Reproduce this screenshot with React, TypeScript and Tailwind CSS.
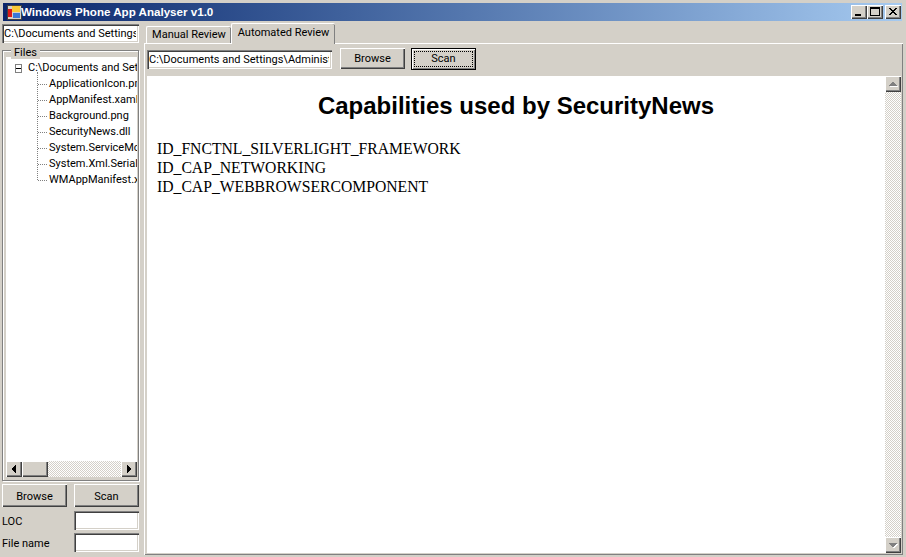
import React from "react";

const raised = "bg-[#d4d0c8] shadow-[inset_1px_1px_0_#ffffff,inset_-1px_-1px_0_#404040,inset_-2px_-2px_0_#808080]";
const sunken = "bg-white shadow-[inset_1px_1px_0_#808080,inset_2px_2px_0_#404040,inset_-1px_-1px_0_#ffffff,inset_-2px_-2px_0_#d4d0c8]";
const checker = "bg-[repeating-conic-gradient(#d4d0c8_0_25%,#ffffff_0_50%)] bg-[length:2px_2px]";
const ui = "font-['Roboto',sans-serif] text-[11px] text-black";

function Btn({ children, className = "" }: { children: React.ReactNode; className?: string }) {
  return <div className={`flex items-center justify-center ${ui} ${raised} ${className}`}>{children}</div>;
}

function Input({ value, className = "" }: { value?: string; className?: string }) {
  return (
    <div className={`${sunken} pl-[2px] pr-[3px] pt-[2px] leading-[15px] ${ui} ${className}`}>
      <div className="overflow-hidden whitespace-nowrap">{value}</div>
    </div>
  );
}

function CaptionBtn({ children, className = "" }: { children: React.ReactNode; className?: string }) {
  return (
    <div className={`flex h-[14px] w-[16px] items-center justify-center ${raised} ${className}`}>
      <svg width="16" height="14" viewBox="0 0 16 14" shapeRendering="crispEdges">{children}</svg>
    </div>
  );
}

function ScrollBtn({ dir, dark }: { dir: "up" | "down" | "left" | "right"; dark?: boolean }) {
  const pts = {
    up: "8,5 4,10 12,10",
    down: "4,6 12,6 8,11",
    left: "5,8 10,4 10,12",
    right: "11,8 6,4 6,12",
  }[dir];
  return (
    <div className={`h-[16px] w-[16px] shrink-0 ${raised}`}>
      <svg width="16" height="16" viewBox="0 0 16 16" shapeRendering="crispEdges">
        {!dark && <polygon points={pts} fill="#ffffff" transform="translate(1 1)" />}
        <polygon points={pts} fill={dark ? "#000000" : "#808080"} />
      </svg>
    </div>
  );
}

const files = [
  "ApplicationIcon.png",
  "AppManifest.xaml",
  "Background.png",
  "SecurityNews.dll",
  "System.ServiceModel.dll",
  "System.Xml.Serialization.dll",
  "WMAppManifest.xml",
];

function TreeView() {
  return (
    <div className={`relative min-h-0 flex-1 overflow-hidden pt-[3px] leading-[16px] ${ui}`}>
      <div className="flex h-[16px] items-center">
        <div className="ml-[9px] flex h-[9px] w-[9px] items-center justify-center border border-[#808080] bg-white">
          <div className="h-[1px] w-[5px] bg-black" />
        </div>
        <span className="ml-[6px] whitespace-nowrap">C:\Documents and Settings</span>
      </div>
      <div className="absolute left-[31px] top-[15px] h-[108px] w-0 border-l border-dotted border-[#808080]" />
      {files.map((f) => (
        <div key={f} className="flex h-[16px] items-center pl-[32px]">
          <div className="mr-[2px] w-[9px] shrink-0 border-t border-dotted border-[#808080]" />
          <span className="whitespace-nowrap">{f}</span>
        </div>
      ))}
    </div>
  );
}

export default function App() {
  return (
    <div className="flex h-[557px] w-[906px] flex-col overflow-hidden bg-[#d4d0c8] font-['Liberation_Sans',Arial,sans-serif]">
      <div className="ml-[3px] mr-[4px] mt-[3px] flex h-[18px] shrink-0 items-center bg-gradient-to-r from-[#0a246a] to-[#a6caf0] pl-[3px] pr-[1px]">
        <svg width="16" height="16" viewBox="0 0 16 16" shapeRendering="crispEdges" className="shrink-0">
          <rect x="1" y="1" width="14" height="14" fill="#d4d0c8" stroke="#404040" />
          <rect x="6" y="2" width="8" height="6" fill="#f8c838" />
          <rect x="2" y="5" width="4" height="8" fill="#d81818" />
          <rect x="7" y="9" width="7" height="5" fill="#3878d8" />
        </svg>
        <span className="ml-[-1px] whitespace-nowrap text-[11.6px] font-bold text-white">
          Windows Phone App Analyser v1.0
        </span>
        <div className="ml-auto flex">
          <CaptionBtn><rect x="4" y="9" width="6" height="2" fill="#000" /></CaptionBtn>
          <CaptionBtn>
            <rect x="3.5" y="2.5" width="9" height="8" fill="none" stroke="#000" />
            <rect x="3" y="2" width="10" height="2" fill="#000" />
          </CaptionBtn>
          <CaptionBtn className="ml-[2px]">
            <path d="M4 3h2v1h1v1h2v-1h1v-1h2v1h-1v1h-1v1h-1v1h1v1h1v1h1v1h-2v-1h-1v-1h-2v1h-1v1h-2v-1h1v-1h1v-1h1v-1h-1v-1h-1v-1h-1z" fill="#000" />
          </CaptionBtn>
        </div>
      </div>

      <div className="flex min-h-0 flex-1 pl-[2px] pr-[1px] pt-[3px]">
        {/* Left column */}
        <div className="flex w-[137px] shrink-0 flex-col">
          <Input value="C:\Documents and Settings" className="h-[19px] shrink-0" />
          <div className="relative mt-[7px] flex h-[431px] shrink-0 flex-col border border-[#808080] pb-[3px] pl-[3px] pr-[1px] pt-[6px] shadow-[inset_1px_1px_0_#ffffff,1px_1px_0_#ffffff]">
            <div className={`absolute left-[8px] top-[-4px] bg-[#d4d0c8] px-[3px] leading-[12px] ${ui}`}>Files</div>
            <div className="flex min-h-0 flex-1 flex-col bg-white">
              <TreeView />
              <div className={`flex h-[16px] shrink-0 ${checker}`}>
                <ScrollBtn dir="left" dark />
                <div className={`h-[16px] w-[26px] ${raised}`} />
                <div className="flex-1" />
                <ScrollBtn dir="right" dark />
              </div>
            </div>
          </div>
          <div className="mt-[3px] flex gap-[7px]">
            <Btn className="h-[23px] w-[65px] pt-[3px]">Browse</Btn>
            <Btn className="h-[23px] w-[65px] pt-[3px]">Scan</Btn>
          </div>
          <div className="mt-[4px] flex h-[19px] items-center justify-between">
            <span className={`pt-[4px] ${ui}`}>LOC</span>
            <Input className="h-[19px] w-[65px]" />
          </div>
          <div className="mt-[3px] flex h-[19px] items-center justify-between">
            <span className={`pt-[4px] ${ui}`}>File name</span>
            <Input className="h-[19px] w-[65px]" />
          </div>
        </div>

        {/* Right column */}
        <div className="ml-[5px] flex min-w-0 flex-1 flex-col">
          <div className="relative z-10 flex h-[19px] shrink-0 items-end pl-[2px]">
            <div className={`flex h-[17px] w-[85px] items-center justify-center rounded-t-[2px] border-l border-t border-white shadow-[inset_-1px_0_0_#808080] ${ui}`}>
              Manual Review
            </div>
            <div className={`relative mb-[-1px] flex h-[21px] w-[104px] items-start justify-center rounded-t-[2px] border-l border-t border-white bg-[#d4d0c8] pt-[1px] shadow-[inset_-1px_0_0_#808080] ${ui}`}>
              Automated Review
            </div>
          </div>
          <div className="mb-[2px] mr-[2px] flex min-h-0 flex-1 flex-col border-l border-t border-white pb-[2px] pl-[2px] pr-[2px] shadow-[inset_-1px_-1px_0_#808080]">
            <div className="flex h-[32px] shrink-0 items-start pt-[4px]">
              <Input value="C:\Documents and Settings\Administrator" className="mt-[2px] h-[19px] w-[185px]" />
              <Btn className="ml-[8px] h-[21px] w-[65px] pt-[2px]">Browse</Btn>
              <div className="ml-[6px] flex h-[22px] w-[65px] items-center justify-center border border-black bg-[#d4d0c8] shadow-[inset_1px_1px_0_#ffffff,inset_-1px_-1px_0_#808080]">
                <div className={`flex h-[16px] w-[59px] items-center justify-center border border-dotted border-black pt-[1px] ${ui}`}>Scan</div>
              </div>
            </div>
            <div className="flex min-h-0 flex-1 bg-white">
              <div className="min-w-0 flex-1 pl-[10px] pr-[10px] pt-[16px] font-['Liberation_Serif',serif] text-[15.7px] leading-[19px] text-black">
                <h1 className="mb-[19px] text-center font-['Liberation_Sans',Arial,sans-serif] text-[24px] font-bold leading-[28px]">
                  Capabilities used by SecurityNews
                </h1>
                <div>ID_FNCTNL_SILVERLIGHT_FRAMEWORK</div>
                <div>ID_CAP_NETWORKING</div>
                <div>ID_CAP_WEBBROWSERCOMPONENT</div>
              </div>
              <div className={`flex w-[16px] shrink-0 flex-col justify-between ${checker}`}>
                <ScrollBtn dir="up" />
                <ScrollBtn dir="down" />
              </div>
            </div>
          </div>
        </div>
      </div>
    </div>
  );
}
